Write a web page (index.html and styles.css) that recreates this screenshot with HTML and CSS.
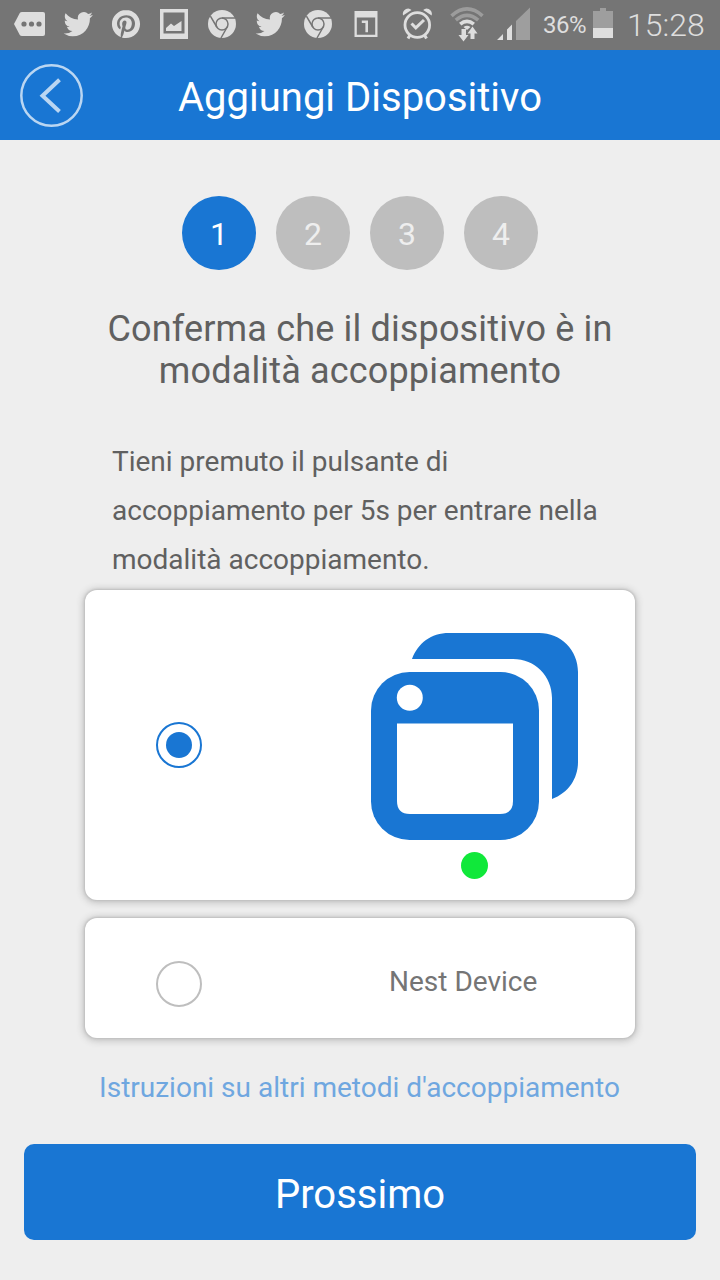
FILE: index.html
```html
<!DOCTYPE html>
<html lang="it">
<head>
<meta charset="utf-8">
<title>Aggiungi Dispositivo</title>
<link rel="stylesheet" href="styles.css">
</head>
<body>
<svg class="symbols" width="0" height="0">
  <symbol id="twitter" viewBox="0 0 48 50"><path transform="translate(9.600 9.300) scale(1.22 1.24)" d="M23.953 4.57a10 10 0 01-2.825.775 4.958 4.958 0 002.163-2.723c-.951.555-2.005.959-3.127 1.184a4.92 4.92 0 00-8.384 4.482C7.69 8.095 4.067 6.13 1.64 3.162a4.822 4.822 0 00-.666 2.475c0 1.71.87 3.213 2.188 4.096a4.904 4.904 0 01-2.228-.616v.06a4.923 4.923 0 003.946 4.827 4.996 4.996 0 01-2.212.085 4.936 4.936 0 004.604 3.417 9.867 9.867 0 01-6.102 2.105c-.39 0-.779-.023-1.17-.067a13.995 13.995 0 007.557 2.209c9.053 0 13.998-7.496 13.998-13.985 0-.21 0-.42-.015-.63A9.935 9.935 0 0024 4.59z"/></symbol>
  <symbol id="chrome" viewBox="0 0 48 50">
    <circle cx="24" cy="24" r="14"/>
    <g fill="none" stroke="#757575" stroke-width="1.5"><circle cx="24" cy="24" r="6"/><path d="M24 18H37.2M18.8 27L12.4 16.2M29.2 27L23 38"/></g>
  </symbol>
</svg>
<div class="status">
  <svg class="slot" viewBox="0 0 48 50"><path d="M16 12H37Q39 12 39 14V34Q39 36 37 36H16Q14.500 36 13.800 35L8 24L13.800 13Q14.500 12 16 12Z"/><g fill="#757575"><circle cx="18" cy="24" r="2.600"/><circle cx="25.500" cy="24" r="2.600"/><circle cx="33" cy="24" r="2.600"/></g></svg>
  <svg class="slot"><use href="#twitter"/></svg>
  <svg class="slot" viewBox="0 0 48 50"><path transform="translate(9.900 9.900) scale(1.175)" d="M12.017 0C5.396 0 .029 5.367.029 11.987c0 5.079 3.158 9.417 7.618 11.162-.105-.949-.199-2.403.041-3.439.219-.937 1.406-5.957 1.406-5.957s-.359-.72-.359-1.781c0-1.663.967-2.911 2.168-2.911 1.024 0 1.518.769 1.518 1.688 0 1.029-.653 2.567-.992 3.992-.285 1.193.6 2.165 1.775 2.165 2.128 0 3.768-2.245 3.768-5.487 0-2.861-2.063-4.869-5.008-4.869-3.41 0-5.409 2.562-5.409 5.199 0 1.033.394 2.143.889 2.741.099.12.112.225.085.345-.09.375-.293 1.199-.334 1.363-.053.225-.172.271-.401.165-1.495-.69-2.433-2.878-2.433-4.646 0-3.776 2.748-7.252 7.92-7.252 4.158 0 7.392 2.967 7.392 6.923 0 4.135-2.607 7.462-6.233 7.462-1.214 0-2.354-.629-2.758-1.379l-.749 2.848c-.269 1.045-1.004 2.352-1.498 3.146 1.123.345 2.306.535 3.55.535 6.607 0 11.985-5.365 11.985-11.987C23.97 5.39 18.592.026 11.985.026L12.017 0z"/></svg>
  <svg class="slot" viewBox="0 0 48 50"><path fill-rule="evenodd" d="M10 9H38V39H10ZM13.500 12.500V33.500H34.500V12.500Z"/><path d="M16 31V28L21 23.500L24 26L31.500 21V31Z"/></svg>
  <svg class="slot"><use href="#chrome"/></svg>
  <svg class="slot"><use href="#twitter"/></svg>
  <svg class="slot"><use href="#chrome"/></svg>
  <svg class="slot" viewBox="0 0 48 50"><path fill-rule="evenodd" d="M12.500 11H35.500V37H12.500ZM14.800 17.500V34.800H33.200V17.500Z"/><path d="M19.800 20.600H26V32.200H23.400V23H19.800Z"/></svg>
  <svg class="system" viewBox="390 0 150 50">
    <g fill="none" stroke="#dedede"><circle cx="417.300" cy="25" r="12.300" stroke-width="2.800"/><path d="M411.500 23.500L415.800 27.800L424 20" stroke-width="3"/><path d="M410 35L408 38.500M424.500 35L426.500 38.500" stroke-width="3"/></g>
    <path d="M403 15.500Q402 11 406 9Q409 7.500 411.500 10ZM431.700 15.500Q432.700 11 428.700 9Q425.700 7.500 423.200 10Z"/>
    <g fill="none" stroke-width="3.600"><path d="M451.500 15.800Q467 2 482.500 15.800M455.800 20.200Q467 10.600 478.200 20.200" stroke="#9c9c9c"/><path d="M460.200 24.200Q467 18.400 473.800 24.200" stroke="#dedede"/></g>
    <path d="M463.500 27Q467 24.500 470.500 27L467 30ZM461.500 29H466V35H468.500L463.500 41.500L458.500 35H461.500ZM470.500 39V33.500H467.500L472.500 26.500L477.500 33.500H474.500V39Z"/>
    <path d="M497 40L503 34V40ZM507 40V29.500L512 24.500V40Z"/><path fill="#9e9e9e" d="M516 40V21L530 7.500V40Z"/>
  </svg>
  <span class="percent">36%</span>
  <svg class="battery" viewBox="0 0 20 50"><path fill="#9e9e9e" d="M0 11H7V8H13V11H20V28H0Z"/><path d="M0 28H20V38H0Z"/></svg>
  <span class="clock">15:28</span>
</div>
<header class="header">
  <svg class="back" viewBox="0 0 63 63"><circle cx="31.500" cy="31.500" r="30.200"/><path d="M39.500 15.700L22.500 31.700L39.500 47.500"/></svg>
  <h1 class="title">Aggiungi Dispositivo</h1>
</header>
<main class="content">
  <div class="steps"><span class="step active">1</span><span class="step">2</span><span class="step">3</span><span class="step">4</span></div>
  <h2 class="heading">Conferma che il dispositivo è in<br>modalità accoppiamento</h2>
  <p class="hint">Tieni premuto il pulsante di<br>accoppiamento per 5s per entrare nella<br>modalità accoppiamento.</p>
  <div class="card device">
    <span class="radio checked"></span>
    <svg class="art" viewBox="371 633 208 247">
      <g fill="#1976d3"><path d="M412 659C418 643 431 633 449 633H539C561 633 578 650 578 672V762C578 779 568 793 552 799V698C552 676 535 659 513 659Z"/><rect x="371" y="672" width="168" height="168" rx="38.500"/></g>
      <circle cx="409.800" cy="697.700" r="13" fill="#fff"/><path fill="#fff" d="M397 723.500H513V801Q513 814 500 814H410Q397 814 397 801Z"/>
      <circle cx="474.500" cy="865.500" r="13.500" fill="#10e83a"/>
    </svg>
  </div>
  <div class="card nest"><span class="radio"></span><span class="nest-label">Nest Device</span></div>
  <a class="link">Istruzioni su altri metodi d'accoppiamento</a>
  <button class="next">Prossimo</button>
</main>
</body>
</html>
```
FILE: styles.css
```css
* { box-sizing: border-box; }
body { margin: 0; width: 720px; height: 1280px; overflow: hidden; background: #eee; color: #606060; font-family: Roboto, sans-serif; }
.symbols { display: none; }
.status { display: flex; height: 50px; padding-left: 6px; background: #757575; color: #dedede; fill: #dedede; white-space: nowrap; }
.slot { width: 48px; height: 50px; flex: none; }
.system { width: 150px; height: 50px; flex: none; }
.percent { width: 53px; padding-left: 3px; font-size: 24px; letter-spacing: -.5px; line-height: 50px; }
.battery { width: 20px; height: 50px; flex: none; }
.clock { padding-left: 14px; font-size: 32px; font-weight: 300; line-height: 51px; }
.header { display: grid; grid-template-columns: 63px 1fr 63px; align-items: center; height: 90px; padding: 1px 20px 0; background: #1976d3; }
.back { width: 63px; height: 63px; fill: none; stroke: #bad6f2; }
.back circle { stroke-width: 2.5px; }
.back path { stroke-width: 4px; }
.title { margin: 5px 0 0; color: #fff; text-align: center; font-size: 40px; font-weight: 400; line-height: 48px; white-space: nowrap; }
.content { display: flex; flex-direction: column; padding: 56px 24px 40px; height: 1140px; }
.steps { display: flex; justify-content: center; gap: 20px; }
.step { width: 74px; height: 74px; border-radius: 50%; background: #bebebe; color: #eee; text-align: center; font-size: 32px; line-height: 76px; }
.step.active { background: #1976d3; color: #fff; }
.heading { margin: 38px 0 0; text-align: center; font-size: 36px; letter-spacing: .16px; line-height: 42px; font-weight: 400; }
.hint { margin: 45px 0 0 88px; font-size: 28px; line-height: 49px; white-space: nowrap; }
.card { display: flex; width: 550px; margin-left: 61px; border-radius: 12px; background: #fff; box-shadow: 0 0 2px 1px #c0c0c0, 0 1px 7px 2px #c2c2c2; }
.device { height: 310px; margin-top: 6px; padding: 43px 56px 20px 71px; justify-content: space-between; }
.radio { display: flex; align-items: center; justify-content: center; width: 46px; height: 46px; border: 2px solid #bebebe; border-radius: 50%; }
.checked { margin-top: 89px; border-color: #1976d3; }
.checked::after { content: ""; width: 26px; height: 26px; border-radius: 50%; background: #1976d3; }
.art { width: 208px; height: 247px; }
.nest { height: 120px; margin-top: 18px; padding: 43px 0 0 71px; color: #757575; }
.nest-label { margin-left: 187px; font-size: 28px; line-height: 42px; }
.link { margin-top: 30px; padding-right: 1px; color: #6fa7e0; text-align: center; font-size: 28px; line-height: 40px; white-space: nowrap; }
.next { height: 96px; margin-top: auto; padding: 4px 0 0; border: 0; border-radius: 10px; background: #1976d3; color: #fff; font: 400 40px Roboto, sans-serif; }
```
